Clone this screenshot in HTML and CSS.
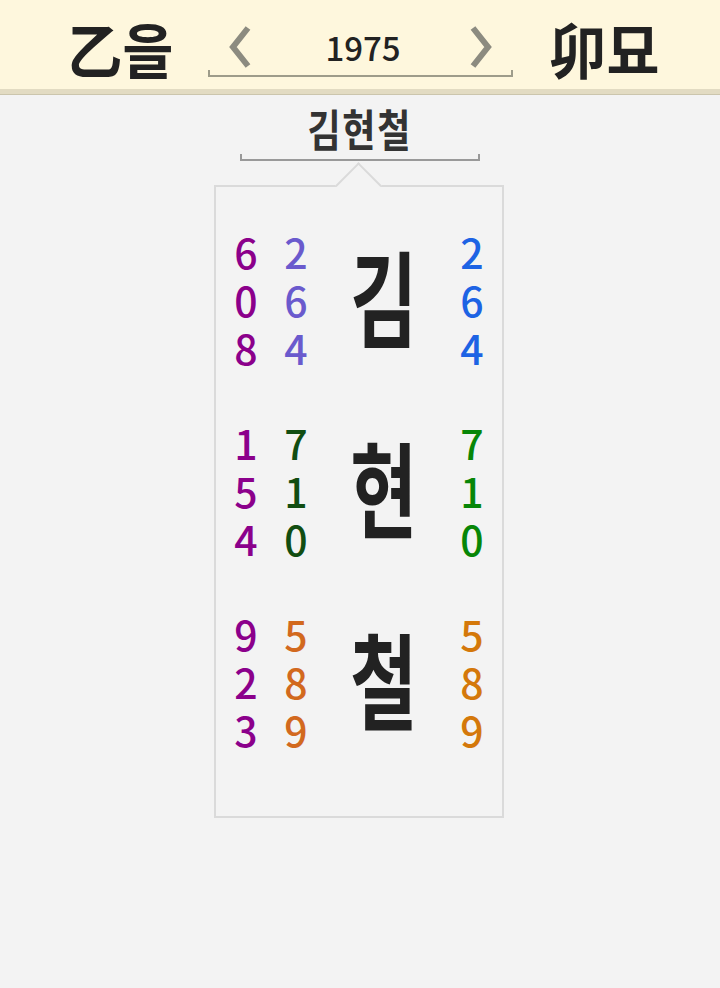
FILE: index.html
```html
<!DOCTYPE html>
<html lang="ko">
<head>
<meta charset="utf-8">
<title>김현철</title>
<link rel="stylesheet" href="styles.css">
</head>
<body>
<header class="top">
  <div class="gz gz-left"><span class="gz-text">乙을</span></div>
  <div class="nav">
    <div class="nav-row">
      <span class="arrow"><svg width="24" height="44" viewBox="0 0 24 44"><polyline points="20,3 5,22 20,41" fill="none" stroke="#8c8b80" stroke-width="6"/></svg></span>
      <span class="year">1975</span>
      <span class="arrow"><svg width="24" height="44" viewBox="0 0 24 44"><polyline points="4,3 19,22 4,41" fill="none" stroke="#8c8b80" stroke-width="6"/></svg></span>
    </div>
    <div class="nav-bracket"></div>
  </div>
  <div class="gz gz-right"><span class="gz-text">卯묘</span></div>
</header>
<main class="content">
  <div class="name"><span class="name-text">김현철</span></div>
  <div class="name-bracket"></div>
  <section class="card">
    <div class="row">
      <div class="col c-purple">6<br>0<br>8</div>
      <div class="col c-slate">2<br>6<br>4</div>
      <div class="big"><span class="big-text">김</span></div>
      <div class="col c-blue">2<br>6<br>4</div>
    </div>
    <div class="row">
      <div class="col c-purple">1<br>5<br>4</div>
      <div class="col c-dgreen">7<br>1<br>0</div>
      <div class="big"><span class="big-text">현</span></div>
      <div class="col c-green">7<br>1<br>0</div>
    </div>
    <div class="row">
      <div class="col c-purple">9<br>2<br>3</div>
      <div class="col c-choc">5<br>8<br>9</div>
      <div class="big"><span class="big-text">철</span></div>
      <div class="col c-orange">5<br>8<br>9</div>
    </div>
  </section>
</main>
</body>
</html>
```
FILE: styles.css
```css
* { box-sizing: border-box; }
html, body { margin: 0; padding: 0; }
body {
  background: #f3f3f3;
  font-family: "Noto Sans CJK KR", "Noto Sans", sans-serif;
  color: #222;
  width: 720px;
  min-height: 988px;
}
.top {
  background: #fef7dd;
  height: 94px;
  border-bottom: 5px solid #e2dbc2;
  box-shadow: 0 1px 0 #cbc5ac;
  display: grid;
  grid-template-columns: 1fr 305px 1fr;
  align-items: start;
}
.gz {
  font-size: 60px;
  font-weight: 700;
  line-height: 1;
  color: #222;
  padding-top: 18px;
}
.gz-text { display: inline-block; transform: scaleX(0.92); }
.gz-left { justify-self: end; margin-right: 34px; }
.gz-left .gz-text { transform-origin: right center; }
.gz-right { justify-self: start; margin-left: 36px; }
.gz-right .gz-text { transform-origin: left center; transform: scaleX(0.96); }
.nav {
  display: flex;
  flex-direction: column;
  padding-top: 24px;
}
.nav-row {
  display: flex;
  align-items: center;
  justify-content: space-between;
  padding: 0 20px;
  height: 46px;
}
.arrow { display: flex; }
.year {
  font-size: 33px;
  line-height: 1;
  font-weight: 500;
  color: #222;
  margin-left: 6px;
}
.nav-bracket {
  height: 7px;
  border: 2px solid #9e9c8a;
  border-top: 0;
}
.content {
  display: flex;
  flex-direction: column;
  align-items: center;
}
.name {
  margin-top: 8px;
  font-size: 44px;
  font-weight: 700;
  line-height: 52px;
  color: #333;
}
.name-text { display: inline-block; transform: scaleX(0.82); letter-spacing: 2px; }
.name-bracket {
  width: 240px;
  height: 7px;
  border: 2px solid #999;
  border-top: 0;
}
.card {
  position: relative;
  width: 290px;
  margin-top: 24px;
  margin-left: -2px;
  border: 2px solid #dadada;
  padding: 40px 10px 63px 10px;
  display: flex;
  flex-direction: column;
  gap: 47px;
}
.card::before {
  content: "";
  position: absolute;
  top: -18px;
  left: 50%;
  width: 31px;
  height: 31px;
  margin-left: -17px;
  background: #f3f3f3;
  border-top: 2px solid #dadada;
  border-left: 2px solid #dadada;
  transform: rotate(45deg);
}
.row {
  display: grid;
  grid-template-columns: 40px 40px 1fr 40px;
  column-gap: 10px;
  align-items: center;
}
.col {
  font-size: 41px;
  line-height: 48px;
  text-align: center;
  font-weight: 500;
}
.big {
  text-align: center;
  font-size: 104px;
  font-weight: 700;
  line-height: 1;
  color: #222;
  margin-top: -8px;
}
.big-text { display: inline-block; transform: scaleX(0.7); }
.c-purple { color: #8b008b; }
.c-slate { color: #6a5acd; }
.c-blue { color: #1d63e4; }
.c-dgreen { color: #114d11; }
.c-green { color: #078607; }
.c-choc { color: #d2691e; }
.c-orange { color: #d4780a; }
```
